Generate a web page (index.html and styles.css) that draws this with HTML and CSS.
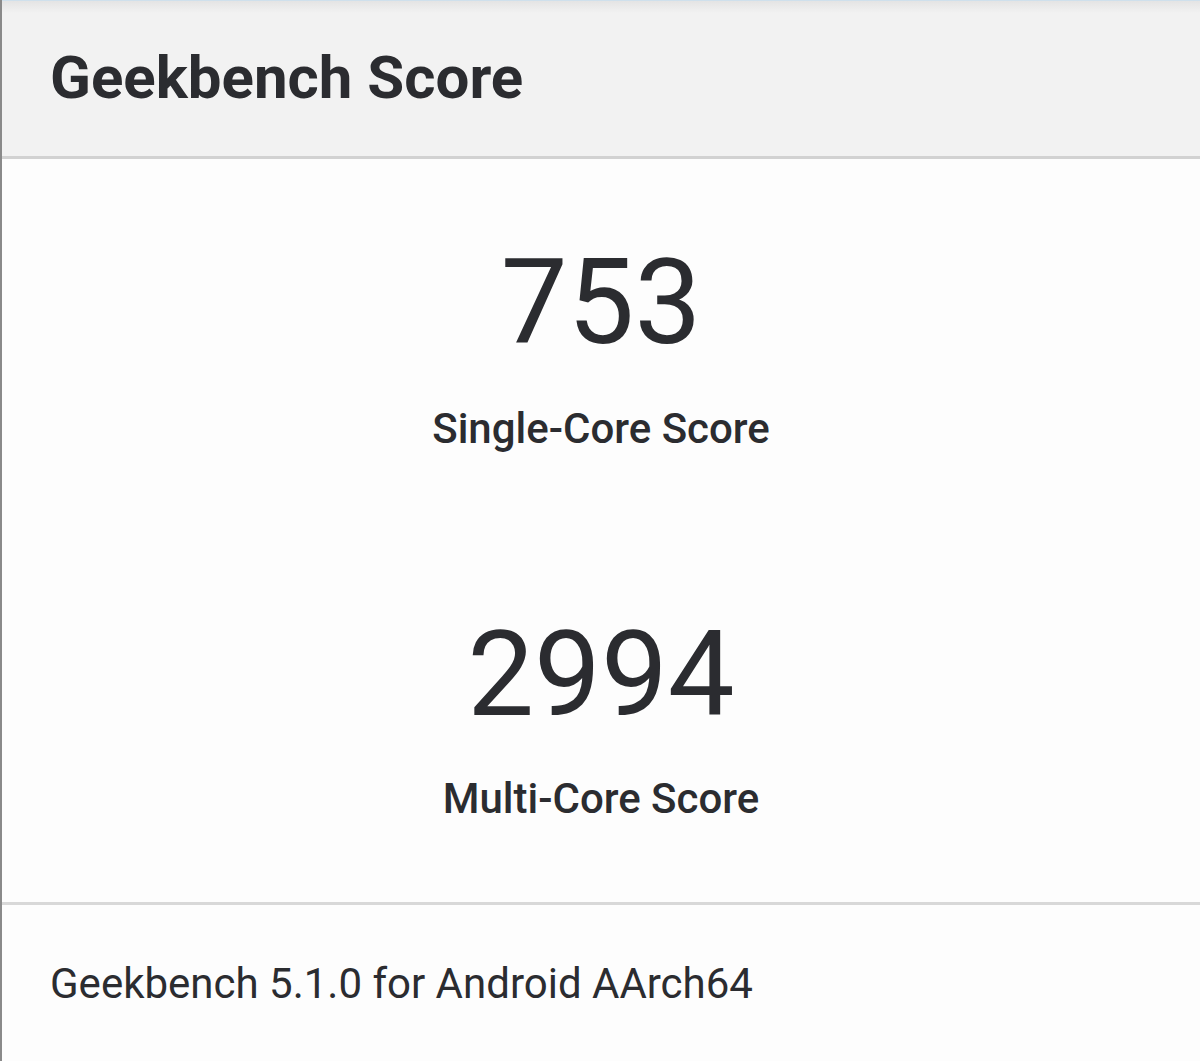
FILE: index.html
```html
<!DOCTYPE html>
<html lang="en">
<head>
    <meta charset="UTF-8">
    <meta name="viewport" content="width=device-width, initial-scale=1.0">
    <title>Geekbench Score</title>
    <link rel="stylesheet" href="styles.css">
</head>
<body>
    <div class="card">
        <div class="card-header">
            <h1>Geekbench Score</h1>
        </div>
        <div class="card-body">
            <div class="score">
                <div class="score-value">753</div>
                <div class="score-label">Single-Core Score</div>
            </div>
            <div class="score">
                <div class="score-value">2994</div>
                <div class="score-label">Multi-Core Score</div>
            </div>
        </div>
        <div class="card-footer">
            Geekbench 5.1.0 for Android AArch64
        </div>
    </div>
</body>
</html>
```

FILE: styles.css
```css
html, body {
    margin: 0;
    padding: 0;
    height: 100%;
}
body {
    font-family: Roboto, "Noto Sans", Arial, sans-serif;
    color: #2b2c30;
    background-color: #fdfdfd;
}
.card {
    height: 1061px;
    border-left: 2px solid #8a8a8a;
    display: flex;
    flex-direction: column;
    box-sizing: border-box;
}
.card-header {
    height: 159px;
    flex-shrink: 0;
    background: linear-gradient(#e4e4e4, #f2f2f2 12px);
    border-top: 1px solid #cfe0ec;
    border-bottom: 3px solid #d2d2d2;
    box-sizing: border-box;
    display: flex;
    align-items: center;
    padding: 0 48px 2px;
}
.card-header h1 {
    margin: 0;
    font-size: 60px;
    font-weight: 700;
}
.card-body {
    height: 746px;
    flex-shrink: 0;
    border-bottom: 3px solid #d8d8d8;
    display: flex;
    flex-direction: column;
    align-items: center;
    padding-top: 84px;
    box-sizing: border-box;
}
.score {
    text-align: center;
    margin-bottom: 165px;
}
.score-value {
    font-size: 119px;
    line-height: 1;
}
.score-label {
    margin-top: 46px;
    font-size: 42px;
    font-weight: 500;
    line-height: 1;
}
.score + .score .score-label {
    margin-top: 44px;
}
.card-footer {
    flex: 1;
    display: flex;
    align-items: center;
    padding: 0 48px;
    font-size: 42px;
}
```
